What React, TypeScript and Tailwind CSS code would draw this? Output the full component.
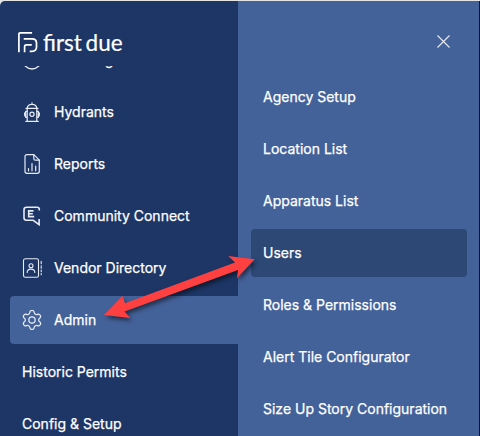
import React from 'react';

const iconProps = {
  width: 20,
  height: 20,
  viewBox: '0 0 20 20',
  fill: 'none',
  stroke: '#e8ecf4',
  strokeWidth: 1.1,
  strokeLinecap: 'round' as const,
  strokeLinejoin: 'round' as const,
};

const InvoicingIcon = () => (
  <svg {...iconProps} strokeWidth={1.4}>
    <circle cx="10" cy="10" r="9" />
    <path d="M10 4v11.500M13 7c-1-1.6-6-1.6-6 .8s6 1.200 6 3.600-5 2.200-6 .6" />
  </svg>
);

const HydrantIcon = () => (
  <svg {...iconProps} strokeWidth={1.2}>
    <path d="M10 .8v1.400M5.200 6.300C5.400 3.800 7.500 2.300 10 2.300s4.600 1.500 4.800 4M4 6.400h12M5.200 6.400v12.300M14.800 6.400v12.300M3.800 19.300h12.500" />
    <path d="M5 9.300H3.700v6H5M15 9.300h1.300v6H15M3.600 10.800H2.700v3h.9M16.400 10.800h.9v3h-.9" />
    <circle cx="10" cy="12.300" r="2.100" />
  </svg>
);

const ReportsIcon = () => (
  <svg {...iconProps} strokeWidth={1.2}>
    <path d="M11.800.7H5C3.800.7 3 1.500 3 2.700v14.600c0 1.200.8 2 2 2h10.300c1.200 0 2-.8 2-2V6.200L11.800.7Z" />
    <path d="M11.800.7v4c0 1 .5 1.500 1.500 1.500h4M6.500 14.500v2.300M10 9.500v7.300M13.700 12v4.800" />
  </svg>
);

const CommunityIcon = () => (
  <svg {...iconProps} strokeWidth={1.6} strokeLinecap="butt" strokeLinejoin="miter">
    <path d="M17.300 4.500V3.500c0-1.300-.8-2.200-2.200-2.200H4.500c-1.500 0-2.500 1-2.500 2.500v8c0 1.500 1 2.500 2.500 2.500h6.700l5.900 4.300V13" />
    <path d="M11.500 4.900H6.700v5.700h5.500M6.700 7.700h4.100" />
  </svg>
);

const VendorIcon = () => (
  <svg {...iconProps}>
    <rect x="1.500" y=".8" width="15" height="18.500" rx="1.800" />
    <circle cx="9" cy="7.800" r="2" />
    <path d="M5.200 14.500c0-2.500 1.400-3.400 3.800-3.400s3.800.9 3.800 3.400" />
    <path d="M19.200 3.200v2.500M19.200 7.700v2.500M19.200 12.100v1.600M19.200 15.600v1.200" />
  </svg>
);

const GearIcon = () => (
  <svg {...iconProps} viewBox="1.500 1.500 21 21" strokeWidth={1.3}>
    <path d="M9.671 4.136a2.340 2.340 0 0 1 4.659 0 2.340 2.340 0 0 0 3.319 1.915 2.340 2.340 0 0 1 2.330 4.033 2.340 2.340 0 0 0 0 3.831 2.340 2.340 0 0 1-2.330 4.033 2.340 2.340 0 0 0-3.319 1.915 2.340 2.340 0 0 1-4.659 0 2.340 2.340 0 0 0-3.320-1.915 2.340 2.340 0 0 1-2.330-4.033 2.340 2.340 0 0 0 0-3.831A2.340 2.340 0 0 1 6.350 6.051a2.340 2.340 0 0 0 3.319-1.915" />
    <circle cx="12" cy="12" r="3.300" />
  </svg>
);

const navItems = [
  { label: 'Invoicing', icon: InvoicingIcon },
  { label: 'Hydrants', icon: HydrantIcon },
  { label: 'Reports', icon: ReportsIcon },
  { label: 'Community Connect', icon: CommunityIcon },
  { label: 'Vendor Directory', icon: VendorIcon },
  { label: 'Admin', icon: GearIcon, active: true },
  { label: 'Historic Permits' },
  { label: 'Config & Setup' },
];

const adminItems = [
  { label: 'Agency Setup' },
  { label: 'Location List' },
  { label: 'Apparatus List' },
  { label: 'Users', active: true },
  { label: 'Roles & Permissions' },
  { label: 'Alert Tile Configurator' },
  { label: 'Size Up Story Configuration' },
];

const Logo = () => (
  <div className="flex items-center gap-[5px]">
    <svg width="20" height="22" viewBox="0 0 20 22" fill="none" stroke="white" strokeWidth="1.700">
      <path d="M.9 21.300V3c0-.8.400-1.200 1.200-1.200h12M5.700 7.900h8.300c2.900 0 4.500 1.600 4.500 4.200v3.900c0 2.600-1.600 4.300-4.500 4.300h-2.300M6.600 21.300v-5.600c0-1.200.6-1.800 1.800-1.800h5.400" />
    </svg>
    <span className="mt-0.5 whitespace-nowrap font-['Lato',sans-serif] text-[22.5px] leading-[26px] [-webkit-text-stroke:0.2px_white] [word-spacing:-2px]">
      first due
    </span>
  </div>
);

const Arrow = () => (
  <svg
    className="absolute left-[90px] top-[240px] drop-shadow-[2px_3px_2px_rgba(0,0,0,0.5)]"
    width="180"
    height="90"
    viewBox="90 240 180 90"
  >
    <path
      d="M104 315L122.500 296L125 303.200L235 262.500L228.300 256L254.700 259.300L237 278.300L238 270L124.500 311.500L130.300 318Z"
      fill="#ff4040"
    />
  </svg>
);

const App = () => {
  return (
    <div className="relative h-[436px] w-[480px] overflow-hidden bg-[#08162f] pt-px font-['Inter',sans-serif] text-sm text-white [-webkit-text-stroke:0.25px_white]">
      <div className="absolute left-0 top-0 h-px w-full bg-[#e4e4e4]" />
      <div className="absolute left-0 top-0 size-3 bg-[#e4e4e4]" />
      <div className="relative flex h-[435px] w-[479px] overflow-hidden rounded-tl-[5px]">
        <aside className="flex w-[238px] shrink-0 flex-col bg-[#1d3666]">
          <div className="h-[65px] shrink-0 pl-[18px] pt-[27px]">
            <Logo />
          </div>
          <nav className="min-h-0 flex-1 overflow-hidden pl-[10px]">
            <div className="-mt-[30px] flex flex-col gap-1">
              {navItems.map(({ label, icon: Icon, active }) => (
                <a
                  key={label}
                  className={`flex h-12 shrink-0 items-center gap-3 rounded-l pl-3 ${active ? 'bg-[#44629a]' : ''}`}
                >
                  {Icon && <Icon />}
                  {label}
                </a>
              ))}
            </div>
          </nav>
        </aside>
        <section className="flex flex-1 flex-col bg-[#44629a] pl-[13px] pr-3">
          <div className="flex h-[72px] shrink-0 items-center justify-end pr-[17px] pt-2">
            <svg width="13" height="13" viewBox="0 0 13 13" stroke="#e3e8f2" strokeWidth="1.200">
              <path d="M.5.500l12 12M12.500.500l-12 12" />
            </svg>
          </div>
          <div className="flex flex-col gap-1">
            {adminItems.map(({ label, active }) => (
              <a
                key={label}
                className={`flex h-12 items-center whitespace-nowrap rounded pl-3 ${active ? 'bg-[#2d4875]' : ''}`}
              >
                {label}
              </a>
            ))}
          </div>
        </section>
      </div>
      <Arrow />
    </div>
  );
};

export default App;
